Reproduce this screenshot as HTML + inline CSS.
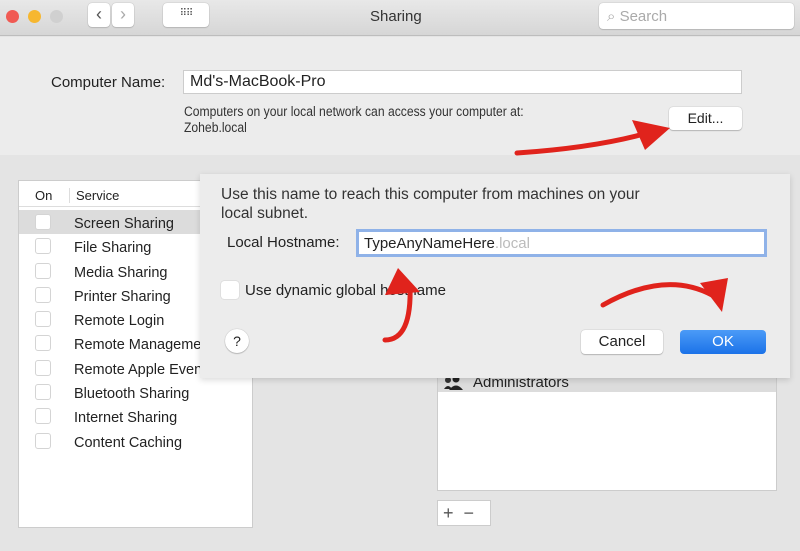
<!DOCTYPE html>
<html><head><style>
*{margin:0;padding:0;box-sizing:border-box}
body{width:800px;height:551px;overflow:hidden;font-family:"Liberation Sans",sans-serif;background:#e4e4e4;position:relative;color:#222}
.a{position:absolute}
.tb{left:0;top:0;width:800px;height:36px;background:linear-gradient(#e8e8e8,#d6d6d6);border-bottom:1px solid #bdbdbd}
.dot{width:13px;height:13px;border-radius:50%;top:10px}
.btn{background:#fff;border-radius:4px;box-shadow:0 0 1px #999,0 1px 1px #bbb}
.top{left:0;top:37px;width:800px;height:118px;background:#ececec}
.row{font-size:14.5px;color:#222}
.cb{width:16px;height:16px;border:1px solid #d4d4d4;border-radius:3px;background:#fff;margin-bottom:8.3px}
</style></head><body>
<div class="a tb"></div>
<div class="a dot" style="left:6px;background:#f05a53"></div>
<div class="a dot" style="left:28px;background:#f6b730"></div>
<div class="a dot" style="left:50px;background:#d0d0d0"></div>
<div class="a btn" style="left:88px;top:3px;width:22px;height:24px;font-size:18px;text-align:center;line-height:22px;color:#555">&#x2039;</div>
<div class="a btn" style="left:112px;top:3px;width:22px;height:24px;font-size:18px;text-align:center;line-height:22px;color:#aaa">&#x203A;</div>
<div class="a btn" style="left:163px;top:3px;width:46px;height:24px;font-size:10px;text-align:center;line-height:22px;color:#555;letter-spacing:-1px">⠿⠿</div>
<div class="a" style="left:370px;top:8px;font-size:15px;color:#333">Sharing</div>
<div class="a btn" style="left:599px;top:3px;width:195px;height:26px;font-size:15px;color:#aaa;padding:5px 8px">&#x2315; Search</div>
<div class="a top"></div>
<div class="a row" style="left:51px;top:74px;font-size:15px">Computer Name:</div>
<div class="a" style="left:183px;top:70px;width:559px;height:24px;background:#fff;border:1px solid #ccc;font-size:16px;padding:2px 6px">Md's-MacBook-Pro</div>
<div class="a" style="left:184px;top:104px;font-size:13.5px;line-height:16px;color:#333;transform:scaleX(.9);transform-origin:0 0">Computers on your local network can access your computer at:<br>Zoheb.local</div>
<div class="a btn" style="left:669px;top:107px;width:73px;height:23px;font-size:14px;text-align:center;line-height:22px">Edit...</div>
<div class="a" style="left:18px;top:180px;width:235px;height:348px;background:#fff;border:1px solid #ccc"></div>
<div class="a" style="left:19px;top:181px;width:233px;height:26px;border-bottom:1px solid #ddd;font-size:13px;padding:7px 16px">On<span style="position:absolute;left:50px;border-left:1px solid #ddd;padding-left:6px">Service</span></div>
<div class="a" style="left:19px;top:210px;width:233px;height:24px;background:#dcdcdc"></div>
<div class="a" style="left:35px;top:214px">
<div class="cb"></div><div class="cb"></div><div class="cb"></div><div class="cb"></div><div class="cb"></div><div class="cb"></div><div class="cb"></div><div class="cb"></div><div class="cb"></div><div class="cb"></div></div>
<div class="a row" style="left:74px;top:212px;line-height:24.3px">
<div>Screen Sharing</div><div>File Sharing</div><div>Media Sharing</div><div>Printer Sharing</div><div>Remote Login</div><div>Remote Management</div><div>Remote Apple Events</div><div>Bluetooth Sharing</div><div>Internet Sharing</div><div>Content Caching</div></div>
<div class="a" style="left:437px;top:372px;width:340px;height:119px;background:#fff;border:1px solid #ccc"></div>
<div class="a" style="left:438px;top:372px;width:338px;height:20px;background:#dcdcdc;font-size:15px;padding-left:35px;padding-top:2px">Administrators</div>
<svg class="a" style="left:443px;top:375px" width="22" height="16"><circle cx="5" cy="5" r="3" fill="#333"/><circle cx="13" cy="4" r="3.5" fill="#222"/><path d="M1 14 Q5 8 9 14Z M6 15 Q13 6 20 15Z" fill="#222"/></svg>
<div class="a" style="left:437px;top:500px;width:54px;height:26px;background:#fff;border:1px solid #ccc;font-size:18px;color:#555;line-height:24px">&nbsp;+ &nbsp;−</div>
<div class="a" style="left:200px;top:174px;width:590px;height:204px;background:#ececec;box-shadow:0 2px 6px rgba(0,0,0,.15)"></div>
<div class="a" style="left:221px;top:185px;font-size:15.5px;line-height:19px;color:#333">Use this name to reach this computer from machines on your<br>local subnet.</div>
<div class="a" style="left:227px;top:234px;font-size:15px">Local Hostname:</div>
<div class="a" style="left:356px;top:229px;width:411px;height:28px;background:#fff;border:3px solid #8fb2e8;font-size:15px;padding:3px 5px">TypeAnyNameHere<span style="color:#bbb">.local</span></div>
<div class="a" style="left:221px;top:281px;width:18px;height:18px;background:#fff;border-radius:3px;box-shadow:0 0 1px #999"></div>
<div class="a" style="left:245px;top:282px;font-size:15px">Use dynamic global hostname</div>
<div class="a btn" style="left:225px;top:329px;width:24px;height:24px;border-radius:50%;text-align:center;line-height:24px;font-size:14px">?</div>
<div class="a btn" style="left:581px;top:330px;width:82px;height:24px;text-align:center;line-height:24px;font-size:15px">Cancel</div>
<div class="a" style="left:680px;top:330px;width:86px;height:24px;border-radius:4px;background:linear-gradient(#4b9bf7,#1b72e8);color:#fff;text-align:center;line-height:24px;font-size:15px">OK</div>
<svg class="a" style="left:0;top:0" width="800" height="551">
<g fill="none" stroke="#e0231c" stroke-width="5" stroke-linecap="round">
<path d="M517 153 Q590 148 640 135"/>
<path d="M385 340 Q412 340 410 285"/>
<path d="M603 305 Q665 270 712 295"/>
</g>
<g fill="#e0231c">
<polygon points="632,120 670,128 645,150"/>
<polygon points="398,268 385,295 420,292"/>
<polygon points="700,283 728,278 722,312"/>
</g>
</svg>
</body></html>
